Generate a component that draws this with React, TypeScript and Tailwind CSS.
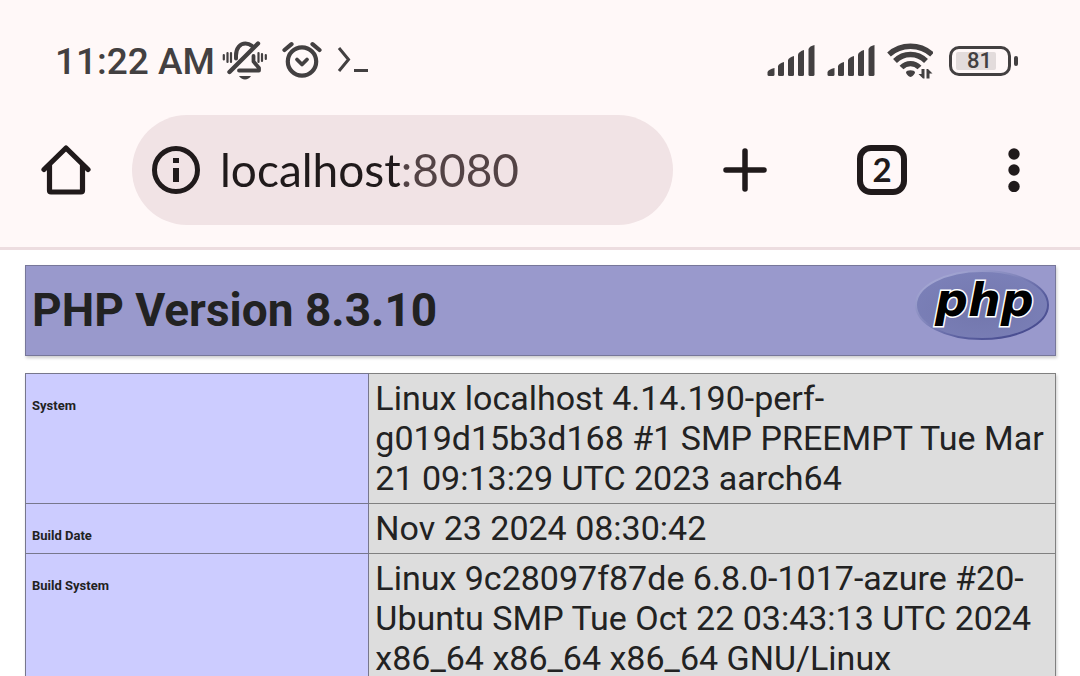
import { useState } from "react";

const rows = [
  {
    name: "System",
    value:
      "Linux localhost 4.14.190-perf-g019d15b3d168 #1 SMP PREEMPT Tue Mar 21 09:13:29 UTC 2023 aarch64",
  },
  { name: "Build Date", value: "Nov 23 2024 08:30:42" },
  {
    name: "Build System",
    value:
      "Linux 9c28097f87de 6.8.0-1017-azure #20-Ubuntu SMP Tue Oct 22 03:43:13 UTC 2024 x86_64 x86_64 x86_64 GNU/Linux",
  },
];

function BellOffIcon() {
  return (
    <svg width="46" height="40" viewBox="0 0 46 40" fill="none" stroke="currentColor" strokeLinecap="round" aria-hidden="true">
      <path d="M1.800 15v4.500M5.500 13v9M9 13v9M36.500 13v9M40 14v7M43.800 15v4" strokeWidth="2.200" />
      <path d="M14 18.500v-3C14 8 18 3.500 23.500 3.500c2.500 0 4.500 0.800 6.500 2.300" strokeWidth="4" />
      <path d="M36 3.500 7.500 32" strokeWidth="4.400" />
      <path d="M31.500 16v5.500l5.500 6.500v2.500H17" strokeWidth="3.800" strokeLinejoin="round" />
      <path d="M17 36h12c-1.500 2.200-3.500 3.400-6 3.400s-4.500-1.200-6-3.400z" fill="currentColor" stroke="none" />
    </svg>
  );
}

function AlarmIcon() {
  return (
    <svg width="40" height="38" viewBox="0 0 40 38" fill="none" stroke="currentColor" strokeWidth="4.200" strokeLinecap="round" strokeLinejoin="round" aria-hidden="true">
      <circle cx="20" cy="20.500" r="14.200" />
      <path d="M2.500 9 9.500 3.200M37.500 9l-7-5.800" />
      <path d="m15 18.500 5 5 5-5" strokeWidth="3.800" />
    </svg>
  );
}

function TerminalIcon() {
  return (
    <svg width="32" height="28" viewBox="0 0 32 28" fill="none" stroke="currentColor" strokeWidth="3" aria-hidden="true">
      <path d="m3 2 9.500 11.500L3 25" />
      <path d="M18 24.500h14" />
    </svg>
  );
}

function SignalIcon() {
  return (
    <svg width="48" height="32" viewBox="0 0 48 32" fill="currentColor" aria-hidden="true">
      <path d="M0.500 27q1-2.500 7-4v6.500q0 1.500-1.500 1.500h-4Q0.500 31 0.500 29.500z" />
      <path d="M11 21q1-2.500 6-4v12.500q0 1.500-1.500 1.500h-3q-1.500 0-1.500-1.500z" />
      <path d="M21 15q1-2.500 6-4v18.500q0 1.500-1.500 1.500h-3q-1.500 0-1.500-1.500z" />
      <path d="M31 9.500q1-3 6-4.500v24.500q0 1.500-1.500 1.500h-3q-1.500 0-1.500-1.500z" />
      <path d="M41.500 4q1-3 6-4v29.500q0 1.500-1.500 1.500h-3q-1.500 0-1.500-1.500z" />
    </svg>
  );
}

function WifiIcon() {
  return (
    <svg width="46" height="38" viewBox="0 0 46 38" fill="none" stroke="currentColor" strokeWidth="5.400" aria-hidden="true">
      <path d="M2 12.500C14 1.500 33 1.500 45 12.500" />
      <path d="M8 19c8.500-8.700 22.500-8.700 31 0" />
      <path d="M14.500 25.500c5-5.200 13-5.200 18 0" />
      <path d="M19 30.500c0-3 9-3 9 0 0 1.500-3 4.500-4.500 4.500S19 32 19 30.500z" fill="currentColor" stroke="none" />
      <path d="M37.500 27v9.500H36L31.500 32h3v-5zM39.500 36.500V27H41l4.500 4.500h-3v5z" stroke="none" fill="currentColor" />
    </svg>
  );
}

function HomeIcon() {
  return (
    <svg width="50" height="52" viewBox="0 0 50 52" fill="none" stroke="currentColor" strokeWidth="5.200" strokeLinecap="round" strokeLinejoin="round" aria-hidden="true">
      <path d="M3 25.500 25 4l22 21.500" />
      <path d="M8.500 21v25.500q0 1.500 1.500 1.500h30q1.500 0 1.500-1.500V21" />
    </svg>
  );
}

function InfoIcon() {
  return (
    <svg width="48" height="48" viewBox="0 0 48 48" aria-hidden="true">
      <circle cx="24" cy="24" r="21.500" fill="none" stroke="currentColor" strokeWidth="5" />
      <path d="M21 12h6v5h-6zM21 22h6v14h-6z" fill="currentColor" />
    </svg>
  );
}

function PlusIcon() {
  return (
    <svg width="44" height="44" viewBox="0 0 44 44" stroke="currentColor" strokeWidth="5.500" strokeLinecap="round" aria-hidden="true">
      <path d="M22 3v38M3 22h38" />
    </svg>
  );
}

function DotsIcon() {
  return (
    <svg width="12" height="44" viewBox="0 0 12 44" fill="currentColor" aria-hidden="true">
      <circle cx="6" cy="6" r="5.700" />
      <circle cx="6" cy="22" r="5.700" />
      <circle cx="6" cy="38.500" r="5.700" />
    </svg>
  );
}

function PhpLogo() {
  return (
    <svg width="136" height="72" viewBox="0 0 136 72" role="img" aria-label="PHP logo">
      <defs>
        <linearGradient id="rim" x1="0" y1="0" x2="1" y2="1">
          <stop offset="0" stopColor="#b3b5dd" />
          <stop offset="0.4" stopColor="#8488bd" />
          <stop offset="0.65" stopColor="#5a5f9f" />
          <stop offset="1" stopColor="#3e4187" />
        </linearGradient>
        <radialGradient id="face" cx="0.5" cy="0.6" r="0.6">
          <stop offset="0" stopColor="#7377ad" />
          <stop offset="1" stopColor="#7b80b8" />
        </radialGradient>
      </defs>
      <ellipse cx="68" cy="35" rx="66" ry="34" fill="url(#face)" stroke="url(#rim)" strokeWidth="2" />
      <text
        x="21"
        y="46"
        fontFamily="DejaVu Sans, sans-serif"
        fontSize="46"
        fontWeight="700"
        fontStyle="italic"
        fill="#000"
        stroke="#fff"
        strokeWidth="3"
        strokeLinejoin="miter"
        paintOrder="stroke"
      >
        php
      </text>
    </svg>
  );
}

export default function App() {
  const [url, setUrl] = useState("localhost:8080");

  return (
    <div className="min-h-screen bg-white font-['Roboto',sans-serif] text-[#222222]">
      <header className="border-b-3 border-[#eddde0] bg-[#fff8f8] text-[#201a1b]">
        <div className="flex h-[115px] items-center justify-between pt-2 pr-[62px] pl-[55px] text-[#434041]">
          <div className="flex items-center">
            <time className="text-[37px] font-medium">11:22 AM</time>
            <div className="ml-[7px] flex items-center gap-[14px] pb-[3px]">
              <BellOffIcon />
              <AlarmIcon />
              <TerminalIcon />
            </div>
          </div>
          <div className="flex items-center gap-3 pb-px">
            <SignalIcon />
            <SignalIcon />
            <WifiIcon />
            <div className="ml-1 flex items-center gap-[3px]">
              <div className="flex h-[30px] w-[62px] items-center rounded-[10px] border-3 border-current px-1">
                <div className="flex h-[18px] w-10 items-center justify-end rounded-xs bg-[#e3dcdc] pr-1">
                  <span className="text-[22px] leading-none font-medium">81</span>
                </div>
              </div>
              <div className="h-[10px] w-1 rounded-xs bg-current" />
            </div>
          </div>
        </div>

        <nav className="flex items-center pr-[60px] pb-[22px] pl-[41px]">
          <button type="button" aria-label="Home" className="mr-[41px]">
            <HomeIcon />
          </button>
          <div className="flex h-[110px] min-w-0 flex-1 items-center gap-5 rounded-full bg-[#f1e3e5] px-5">
            <button type="button" aria-label="Site information">
              <InfoIcon />
            </button>
            <input
              type="text"
              aria-label="Address"
              value={url}
              onChange={(e) => setUrl(e.target.value)}
              className="w-full min-w-0 bg-[linear-gradient(90deg,#201a1b_181px,#534345_181px)] bg-clip-text font-['Lato',sans-serif] text-[46px] leading-[60px] text-transparent caret-[#201a1b] outline-none"
            />
          </div>
          <button type="button" aria-label="New tab" className="ml-[50px]">
            <PlusIcon />
          </button>
          <button
            type="button"
            aria-label="2 open tabs"
            className="ml-[90px] flex size-[50px] items-center justify-center rounded-[14px] border-[6px] border-current pb-px font-['Lato',sans-serif] text-[33px] leading-none font-bold"
          >
            2
          </button>
          <button type="button" aria-label="More options" className="ml-[101px]">
            <DotsIcon />
          </button>
        </nav>
      </header>

      <main className="flex flex-col gap-[17px] pt-[15px] pr-6 pl-[25px]">
        <div className="flex items-start justify-between border border-[#77779a] bg-[#9999cc] px-[6px] py-1 shadow-[1px_2px_3px_rgba(0,0,0,0.2)]">
          <h1 className="py-[10px] text-[46px] leading-[61px] font-bold">PHP Version 8.3.10</h1>
          <a href="http://www.php.net/" className="-mr-px shrink-0">
            <PhpLogo />
          </a>
        </div>

        <table className="w-full table-fixed border-collapse shadow-[1px_2px_3px_rgba(0,0,0,0.2)]">
          <colgroup>
            <col className="w-1/3" />
            <col />
          </colgroup>
          <tbody>
            {rows.map((row) => (
              <tr key={row.name}>
                <th
                  scope="row"
                  className="border border-[#77778c] bg-[#ccccff] px-[6px] py-1 text-left align-baseline text-[13px] font-bold"
                >
                  {row.name}
                </th>
                <td className="border border-[#808080] bg-[#dddddd] px-[6px] pt-1 pb-[5px] align-baseline text-[34px] leading-10 break-words">
                  {row.value}
                </td>
              </tr>
            ))}
          </tbody>
        </table>
      </main>
    </div>
  );
}
